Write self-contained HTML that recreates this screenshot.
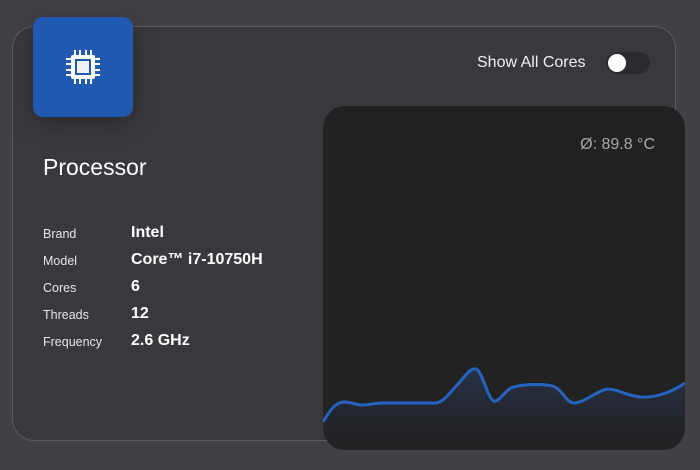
<!DOCTYPE html>
<html><head><style>
html,body{margin:0;padding:0;width:700px;height:470px;overflow:hidden;background:#423f45;font-family:"Liberation Sans",sans-serif;}
.card{position:absolute;left:12px;top:26px;width:662px;height:413px;border:1px solid #5d5a62;border-radius:22px;background:#3a383d;}
.icon{position:absolute;left:33px;top:17px;width:100px;height:100px;background:#2158b0;border-radius:10px;box-shadow:0 6px 24px rgba(0,0,0,0.25);}
.title{position:absolute;left:43px;top:154px;font-size:23px;color:#fff;}
.lbl{position:absolute;left:43px;font-size:12.5px;color:#e6e6e6;}
.val{position:absolute;left:131px;font-size:16px;color:#fff;font-weight:bold;}
.sac{position:absolute;left:477px;top:54px;font-size:16px;color:#eee;}
.track{position:absolute;left:606px;top:52px;width:44px;height:22px;border-radius:11px;background:#2b2a2e;}
.knob{position:absolute;left:608px;top:54px;width:18px;height:18px;border-radius:9px;background:#fff;}
.chart{position:absolute;left:323px;top:106px;width:362px;height:344px;background:#222223;border-radius:22px;overflow:hidden;}
.temp{position:absolute;right:30px;top:30px;font-size:16px;color:#a8a8a8;}
</style></head><body>
<div class="card"></div>
<div class="icon">
<svg width="100" height="100" viewBox="0 0 100 100">
<g transform="translate(0,16)">
<rect x="38" y="22" width="24" height="24" rx="2" fill="#fff"/>
<g stroke="#fff" stroke-width="2">
<line x1="42" y1="17" x2="42" y2="23"/><line x1="47" y1="17" x2="47" y2="23"/><line x1="53" y1="17" x2="53" y2="23"/><line x1="58" y1="17" x2="58" y2="23"/>
<line x1="42" y1="45" x2="42" y2="51"/><line x1="47" y1="45" x2="47" y2="51"/><line x1="53" y1="45" x2="53" y2="51"/><line x1="58" y1="45" x2="58" y2="51"/>
<line x1="33" y1="26" x2="39" y2="26"/><line x1="33" y1="31" x2="39" y2="31"/><line x1="33" y1="37" x2="39" y2="37"/><line x1="33" y1="42" x2="39" y2="42"/>
<line x1="61" y1="26" x2="67" y2="26"/><line x1="61" y1="31" x2="67" y2="31"/><line x1="61" y1="37" x2="67" y2="37"/><line x1="61" y1="42" x2="67" y2="42"/>
</g>
<rect x="42" y="26" width="16" height="16" fill="#2158b0"/>
<rect x="44" y="28" width="12" height="12" fill="#f0f0f5"/>
</g></svg>
</div>
<div class="title">Processor</div>
<div class="lbl" style="top:227px">Brand</div><div class="val" style="top:224px">Intel</div>
<div class="lbl" style="top:254px">Model</div><div class="val" style="top:251px">Core™ i7-10750H</div>
<div class="lbl" style="top:281px">Cores</div><div class="val" style="top:278px">6</div>
<div class="lbl" style="top:308px">Threads</div><div class="val" style="top:305px">12</div>
<div class="lbl" style="top:335px">Frequency</div><div class="val" style="top:332px">2.6 GHz</div>
<div class="sac">Show All Cores</div>
<div class="track"></div><div class="knob"></div>
<div class="chart">
<div class="temp">Ø: 89.8 °C</div>
<svg width="362" height="344" viewBox="323 106 362 344" style="position:absolute;left:0;top:0">
<defs><linearGradient id="g" x1="0" y1="0" x2="0" y2="1"><stop offset="0" stop-color="#2a3a5c" stop-opacity="0.7"/><stop offset="1" stop-color="#222223" stop-opacity="0.2"/></linearGradient></defs>
<path d="M323,422 C330,410 336,402 344,402 C352,402 356,405 362,405 C370,405 374,403 382,403 L437,403 C446,400 450,392 458,384 C466,375 470,368 476,369 C482,370 488,400 494,401 C500,402 506,388 514,387 C520,385 540,383 552,386 C562,388 566,403 574,403 C586,402 598,390 608,389 C618,389 624,395 640,397 C656,398 672,392 685,383 L685,450 L323,450 Z" fill="url(#g)"/>
<path d="M323,422 C330,410 336,402 344,402 C352,402 356,405 362,405 C370,405 374,403 382,403 L437,403 C446,400 450,392 458,384 C466,375 470,368 476,369 C482,370 488,400 494,401 C500,402 506,388 514,387 C520,385 540,383 552,386 C562,388 566,403 574,403 C586,402 598,390 608,389 C618,389 624,395 640,397 C656,398 672,392 685,383" fill="none" stroke="#2563c0" stroke-width="3"/>
</svg>
</div>
</body></html>
